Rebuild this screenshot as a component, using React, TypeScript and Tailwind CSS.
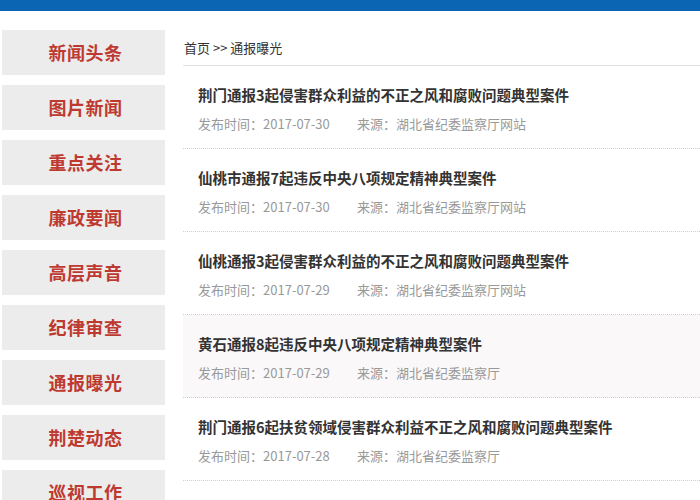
import React from "react";

const nav = ["新闻头条", "图片新闻", "重点关注", "廉政要闻", "高层声音", "纪律审查", "通报曝光", "荆楚动态", "巡视工作"];

const items = [
  { t: "荆门通报3起侵害群众利益的不正之风和腐败问题典型案件", d: "2017-07-30", s: "湖北省纪委监察厅网站" },
  { t: "仙桃市通报7起违反中央八项规定精神典型案件", d: "2017-07-30", s: "湖北省纪委监察厅网站" },
  { t: "仙桃通报3起侵害群众利益的不正之风和腐败问题典型案件", d: "2017-07-29", s: "湖北省纪委监察厅网站" },
  { t: "黄石通报8起违反中央八项规定精神典型案件", d: "2017-07-29", s: "湖北省纪委监察厅", hl: true },
  { t: "荆门通报6起扶贫领域侵害群众利益不正之风和腐败问题典型案件", d: "2017-07-28", s: "湖北省纪委监察厅" },
];

export default function App() {
  return (
    <div
      className="w-[700px] h-[500px] overflow-hidden bg-white"
      style={{ fontFamily: '"Noto Sans CJK SC", "Noto Sans", sans-serif' }}
    >
      <div className="h-[11px] bg-[#0b65b2]" />
      <div className="flex">
        <div className="ml-[2px] w-[163px] pt-[19px] flex flex-col gap-[10px] shrink-0">
          {nav.map((n) => (
            <div
              key={n}
              className="h-[45px] shrink-0 bg-[#ececec] flex items-center justify-center text-[18px] font-bold text-[#be3a30] tracking-[0.5px] pl-[4px]"
            >
              {n}
            </div>
          ))}
        </div>
        <div className="ml-[18px] flex-1">
          <div className="h-[55px] border-b border-[#e3e3e3] flex items-end pb-[8px] pl-[1px] text-[13px] text-[#333]">
            首页 &gt;&gt; 通报曝光
          </div>
          {items.map((it, i) => (
            <div
              key={i}
              className={`h-[83px] border-b border-dotted border-[#cfcfcf] pl-[15px] pt-[19px] ${it.hl ? "bg-[#faf8f9]" : ""}`}
            >
              <div className="text-[14.5px] leading-[20px] font-bold text-[#333] whitespace-nowrap">{it.t}</div>
              <div className="mt-[10px] text-[13px] leading-[18px] text-[#999] flex whitespace-nowrap">
                <span className="w-[159px]">发布时间：{it.d}</span>
                <span>来源：{it.s}</span>
              </div>
            </div>
          ))}
        </div>
      </div>
    </div>
  );
}
